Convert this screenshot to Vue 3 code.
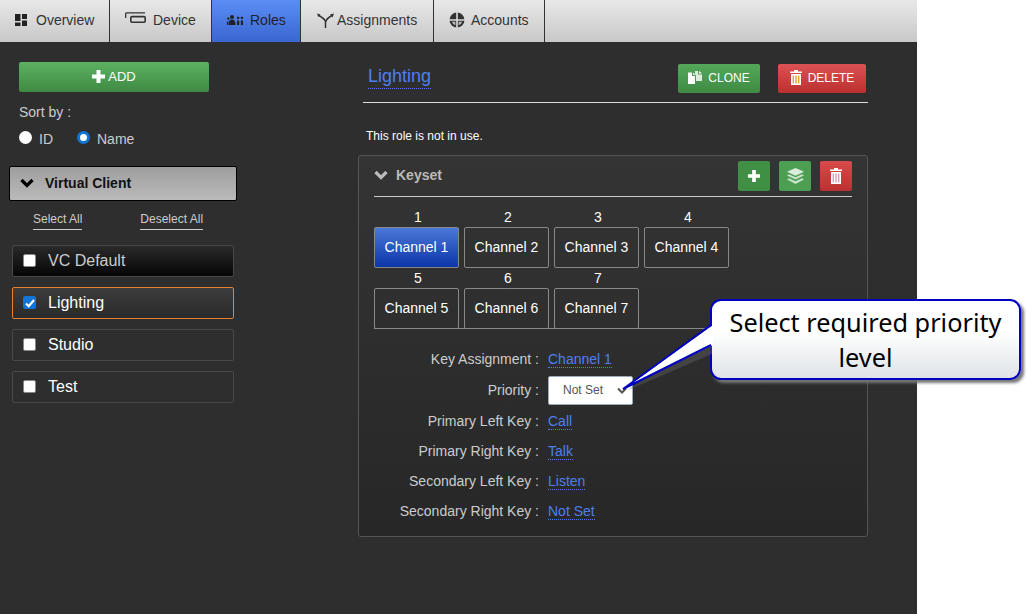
<template>
  <div class="page">
    <nav class="tabs">
      <a v-for="tab in tabs" :key="tab.name" class="tab" :class="[tab.cls, { active: tab.name === 'Roles' }]" :style="{ width: tab.width + 'px' }">
        <svg v-if="tab.name === 'Overview'" class="tab-icon" width="12" height="12" viewBox="0 0 12 12">
          <path d="M0 0h5.500v7H0zM7 0h5v5H7zM0 8.500h5.500V12H0zM7 6.500h5V12H7z" fill="#222" />
        </svg>
        <svg v-else-if="tab.name === 'Device'" class="tab-icon device-icon" width="21" height="11" viewBox="0 0 21 11">
          <path d="M.7 6V2Q.7 .8 2 .8H20" fill="none" stroke="#333" stroke-width="1.300" />
          <rect x="5.800" y="4.600" width="14.400" height="5.600" rx="1.200" fill="none" stroke="#333" stroke-width="1.600" />
        </svg>
        <svg v-else-if="tab.name === 'Roles'" class="tab-icon" width="16" height="10" viewBox="0 0 16 10">
          <circle cx="5" cy="2" r="2" fill="#222" />
          <path d="M1.500 10Q1.500 4.500 5 4.500T8.500 10z" fill="#222" />
          <circle cx="1.300" cy="3.600" r="1.200" fill="#222" />
          <path d="M0 10V6.500h1.500L.8 10z" fill="#222" />
          <rect x="10" y="1.800" width="2.200" height="2.200" fill="#222" />
          <rect x="13.800" y="1.800" width="2.200" height="2.200" fill="#222" />
          <rect x="10" y="5.500" width="2.200" height="4.500" fill="#222" />
          <rect x="13.800" y="5.500" width="2.200" height="4.500" fill="#222" />
        </svg>
        <svg v-else-if="tab.name === 'Assignments'" class="tab-icon" width="17" height="15" viewBox="0 0 17 15">
          <path d="M8.500 15V8.500Q8 6 1 2" fill="none" stroke="#333" stroke-width="1.500" />
          <path d="M8.500 9Q10 5 15 2.500" fill="none" stroke="#333" stroke-width="1.500" />
          <path d="M0 .5L3.500 1.500 1.500 4zM17 .5L13 1.500 15.500 4.500z" fill="#333" />
        </svg>
        <svg v-else class="tab-icon" width="16" height="16" viewBox="0 0 16 16">
          <circle cx="8" cy="8" r="7.500" fill="#333" />
          <path d="M7.200 0h1.600v16H7.200zM0 7.200h16v1.600H0z" fill="#ddd" />
          <path d="M2.800 9.800h3.600v3.400q-2.600-.7-3.600-3.400zM9.600 9.800h3.600q-1 2.700-3.600 3.400z" fill="#bbb" />
        </svg>
        <span>{{ tab.name }}</span>
      </a>
    </nav>

    <div class="body">
      <aside class="sidebar">
        <button class="add-btn">
          <svg width="13" height="13" viewBox="0 0 13 13"><path d="M4.500 0h4v4.500H13v4H8.500V13h-4V8.500H0v-4h4.500z" fill="#fff" /></svg>
          <span>ADD</span>
        </button>
        <div class="sort-label">Sort by :</div>
        <div class="sort-row">
          <span class="radio"></span><span class="radio-text id-text">ID</span>
          <span class="radio checked"></span><span class="radio-text">Name</span>
        </div>

        <div class="group">
          <svg width="14" height="10" viewBox="0 0 14 10"><path d="M1.500 2l5.500 5.500L12.500 2" fill="none" stroke="#000" stroke-width="3.200" /></svg>
          <span>Virtual Client</span>
        </div>
        <div class="select-links">
          <a>Select All</a>
          <a>Deselect All</a>
        </div>

        <div class="role-list">
          <div v-for="role in roles" :key="role" class="role" :class="{ selected: role === 'Lighting', first: role === 'VC Default' }">
            <span class="check" :class="{ on: role === 'Lighting' }">
              <svg v-if="role === 'Lighting'" width="12" height="12" viewBox="0 0 12 12"><path d="M2 6.500l2.700 2.700L10 3" fill="none" stroke="#fff" stroke-width="2.200" /></svg>
            </span>
            <span class="role-name">{{ role }}</span>
          </div>
        </div>
      </aside>

      <main class="content">
        <header class="title-row">
          <a class="title link">Lighting</a>
          <div class="title-actions">
            <button class="btn green clone">
              <svg width="14" height="13" viewBox="0 0 14 13">
                <path d="M0 1.500h4V5h3v8H0z" fill="#fff" />
                <path d="M5 1.500L7.500 4H5z" fill="#e8f2e8" />
                <path d="M7 0h3v3.500h4V10H8V4.500L7 3.500z" fill="#dcebdc" />
                <path d="M11 0l3 2.500h-3z" fill="#fff" />
              </svg>
              <span>CLONE</span>
            </button>
            <button class="btn red delete">
              <svg width="12" height="15" viewBox="0 0 12 15">
                <path d="M4 0h4v1.500h4V3H0V1.500h4zM1 4h10v11H1z" fill="#fff" />
                <path d="M2.600 5.500h1.400v8H2.600zM5.300 5.500h1.400v8H5.300zM8 5.500h1.400v8H8z" fill="#e8a03c" />
              </svg>
              <span>DELETE</span>
            </button>
          </div>
        </header>

        <p class="usage">This role is not in use.</p>

        <section class="panel">
          <div class="panel-head">
            <svg class="chevron" width="14" height="10" viewBox="0 0 14 10"><path d="M1.500 2l5.500 5.500L12.500 2" fill="none" stroke="#bbb" stroke-width="3.200" /></svg>
            <span class="panel-title">Keyset</span>
            <div class="panel-actions">
              <button class="square dark-green">
                <svg width="12" height="12" viewBox="0 0 13 13"><path d="M4.500 0h4v4.500H13v4H8.500V13h-4V8.500H0v-4h4.500z" fill="#fff" /></svg>
              </button>
              <button class="square light-green">
                <svg width="17" height="16" viewBox="0 0 17 16">
                  <path d="M8.500 0l8.500 3.800-8.500 4L0 3.800z" fill="#dcecdc" />
                  <path d="M2 6.300l6.500 3 6.500-3L17 7.500l-8.500 4L0 7.500zM2 10.300l6.500 3 6.500-3 2 1.200L8.500 16 0 11.500z" fill="#c8e2c8" />
                </svg>
              </button>
              <button class="square flat-red">
                <svg width="12" height="16" viewBox="0 0 12 16">
                  <path d="M4 0h4v1.500h4V3H0V1.500h4zM1 4h10v12H1z" fill="#fff" />
                  <path d="M2.600 5.500h1.400v9H2.600zM5.300 5.500h1.400v9H5.300zM8 5.500h1.400v9H8z" fill="#d0a0b8" />
                </svg>
              </button>
            </div>
          </div>

          <div class="keys">
            <div v-for="n in 7" :key="n" class="key">
              <div class="key-num">{{ n }}</div>
              <button class="key-btn" :class="{ active: n === 1 }">Channel {{ n }}</button>
            </div>
          </div>

          <dl class="fields">
            <template v-for="field in fields" :key="field.label">
              <dt>{{ field.label }} :</dt>
              <dd>
                <div v-if="field.select" class="select">Not Set
                  <svg width="10" height="8" viewBox="0 0 10 8"><path d="M1 1.500l4 4 4-4" fill="none" stroke="#555" stroke-width="2" /></svg>
                </div>
                <a v-else class="link">{{ field.value }}</a>
              </dd>
            </template>
          </dl>
        </section>
      </main>
    </div>

    <!-- callout annotation sits over the screenshot -->
    <div class="callout">Select required priority level</div>
    <svg class="callout-tail" width="96" height="75" viewBox="0 0 96 75">
      <path d="M92 12L8 70 92 34z" fill="#555" opacity=".55" />
      <path d="M93 5L3 69 93 25z" fill="#fff" />
      <path d="M91 5L3 69 91 25" fill="none" stroke="#0000c0" stroke-width="2" />
    </svg>
  </div>
</template>

<script setup>
const tabs = [
  { name: 'Overview', width: 110, cls: 'tab-overview' },
  { name: 'Device', width: 102, cls: 'tab-device' },
  { name: 'Roles', width: 89, cls: 'tab-roles' },
  { name: 'Assignments', width: 133, cls: 'tab-assign' },
  { name: 'Accounts', width: 111, cls: 'tab-accounts' },
]

const roles = ['VC Default', 'Lighting', 'Studio', 'Test']

const fields = [
  { label: 'Key Assignment', value: 'Channel 1' },
  { label: 'Priority', select: true },
  { label: 'Primary Left Key', value: 'Call' },
  { label: 'Primary Right Key', value: 'Talk' },
  { label: 'Secondary Left Key', value: 'Listen' },
  { label: 'Secondary Right Key', value: 'Not Set' },
]
</script>

<style>
body {
  margin: 0;
  background: #fff;
}
</style>

<style scoped>
.page {
  position: relative;
  width: 1034px;
  height: 614px;
  overflow: hidden;
  font-family: "Liberation Sans", Arial, sans-serif;
  background: #fff;
}

button {
  font-family: inherit;
  border: 0;
  padding: 0;
}

.tabs {
  display: flex;
  width: 917px;
  height: 42px;
  background: linear-gradient(#e8e8e8, #c8c8c8);
}

.tab {
  box-sizing: border-box;
  display: flex;
  align-items: center;
  gap: 9px;
  padding: 0 0 2px 15px;
  border-right: 1px solid #333;
  font-size: 14px;
  color: #333;
}

.tab.active {
  background: linear-gradient(#5b8df5, #3a66d0);
  color: #222;
}

.tab-device {
  gap: 7px;
}

.tab-roles {
  gap: 7px;
}

.tab-assign {
  padding-left: 16px;
  gap: 3px;
}

.tab-accounts {
  gap: 6px;
}

.tab-icon {
  flex: none;
}

.device-icon {
  margin-top: -6px;
}

.body {
  display: flex;
  width: 917px;
  height: 572px;
  background: #2e2e2e;
}

.sidebar {
  width: 358px;
  box-sizing: border-box;
  padding-top: 20px;
  flex: none;
}

.add-btn {
  display: flex;
  align-items: center;
  justify-content: center;
  gap: 3px;
  width: 190px;
  height: 30px;
  margin-left: 19px;
  padding-bottom: 2px;
  border-radius: 2px;
  background: linear-gradient(#5cb162, #3f8a44);
  color: #fff;
  font-size: 13px;
}

.sort-label {
  margin: 12px 0 0 19px;
  font-size: 14px;
  line-height: 16px;
  color: #ccc;
}

.sort-row {
  display: flex;
  align-items: center;
  height: 20px;
  margin: 9px 0 0 19px;
}

.radio {
  box-sizing: border-box;
  width: 13px;
  height: 13px;
  border-radius: 50%;
  background: #fff;
  margin-top: -3px;
}

.radio.checked {
  border: 3px solid #0f75d8;
}

.radio-text {
  margin-left: 7px;
  font-size: 14px;
  color: #ccc;
}

.id-text {
  margin-right: 24px;
}

.group {
  box-sizing: border-box;
  display: flex;
  align-items: center;
  gap: 11px;
  width: 228px;
  height: 35px;
  margin: 17px 0 0 9px;
  padding: 0 0 2px 10px;
  border: 1px solid #000;
  border-radius: 2px;
  background: linear-gradient(#9e9e9e, #bababa);
  font-size: 14px;
  font-weight: bold;
  color: #111;
}

.select-links {
  display: flex;
  margin: 11px 0 0 33px;
  gap: 58px;
  font-size: 12px;
  color: #ccc;
}

.select-links a {
  padding-bottom: 3px;
  border-bottom: 1px solid #ccc;
}

.role-list {
  display: flex;
  flex-direction: column;
  gap: 10px;
  width: 222px;
  margin: 15px 0 0 12px;
}

.role {
  box-sizing: border-box;
  display: flex;
  align-items: center;
  height: 32px;
  padding-left: 10px;
  border: 1px solid #484848;
  border-radius: 2px;
  font-size: 16px;
  color: #fff;
}

.role.first {
  background: linear-gradient(#2a2a2a, #050505);
  color: #ccc;
}

.role.selected {
  border-color: #e8812f;
  background: linear-gradient(#3c3c3c, #2a2a2a);
}

.check {
  box-sizing: border-box;
  display: flex;
  align-items: center;
  justify-content: center;
  width: 13px;
  height: 13px;
  margin-top: -1px;
  border-radius: 2px;
  background: #fff;
  border: 1px solid #888;
}

.check.on {
  background: #0f75d8;
  border: 0;
}

.role-name {
  margin-left: 12px;
}

.content {
  width: 510px;
  padding-top: 19px;
  box-sizing: border-box;
}

.title-row {
  box-sizing: border-box;
  display: flex;
  justify-content: space-between;
  align-items: flex-start;
  height: 42px;
  margin-left: 5px;
  padding: 3px 2px 0 5px;
  border-bottom: 1px solid #ddd;
}

.title {
  font-size: 18px;
  line-height: 22px;
  margin-top: 1px;
  padding-bottom: 1px;
}

.link {
  color: #4d7ff0;
  border-bottom: 1px dotted #4d7ff0;
}

.title-actions {
  display: flex;
  gap: 18px;
}

.btn {
  display: flex;
  align-items: center;
  justify-content: center;
  gap: 6px;
  height: 29px;
  padding-bottom: 2px;
  box-sizing: border-box;
  border-radius: 2px;
  color: #fff;
  font-size: 12px;
}

.btn.green {
  width: 82px;
  background: linear-gradient(#54a859, #3f8a44);
}

.btn.red {
  width: 88px;
  background: linear-gradient(#dc5252, #bb2f2f);
}

.usage {
  margin: 26px 0 0 8px;
  font-size: 12px;
  line-height: 14px;
  color: #fff;
}

.panel {
  box-sizing: border-box;
  height: 382px;
  margin-top: 12px;
  padding: 5px 15px 0;
  border: 1px solid #555;
  border-radius: 3px;
  background: linear-gradient(#343434, #272727);
}

.panel-head {
  display: flex;
  align-items: center;
  height: 36px;
  padding-bottom: 5px;
  box-sizing: border-box;
  border-bottom: 1px solid #ccc;
}

.chevron {
  margin-bottom: 2px;
}

.panel-title {
  margin: 0 0 2px 8px;
  font-size: 14px;
  font-weight: bold;
  color: #bbb;
}

.panel-actions {
  display: flex;
  gap: 9px;
  margin-left: auto;
}

.square {
  display: flex;
  align-items: center;
  justify-content: center;
  width: 32px;
  height: 30px;
  border-radius: 2px;
}

.dark-green {
  background: #3f8f45;
}

.light-green {
  background: #4b9e52;
}

.flat-red {
  background: linear-gradient(#d94b4b, #bb3030);
}

.keys {
  display: grid;
  grid-template-columns: repeat(4, 85px);
  column-gap: 5px;
  row-gap: 2px;
  align-content: start;
  height: 120px;
  margin-top: 12px;
  box-sizing: border-box;
  border-bottom: 1px solid #888;
}

.key {
  text-align: center;
}

.key-num {
  font-size: 14px;
  line-height: 16px;
  padding-left: 3px;
  color: #fff;
}

.key-btn {
  box-sizing: border-box;
  width: 85px;
  height: 41px;
  margin-top: 2px;
  padding-bottom: 2px;
  display: block;
  background: transparent;
  border: 1px solid #888;
  border-radius: 2px;
  color: #fff;
  font-size: 14px;
}

.key-btn.active {
  background: linear-gradient(#4a78d8, #0c35a8);
}

.fields {
  display: grid;
  grid-template-columns: 165px 1fr;
  grid-template-rows: 30px 32px 30px 30px 30px 30px;
  column-gap: 9px;
  align-items: center;
  margin: 15px 0 0 0;
  font-size: 14px;
}

.fields dt {
  text-align: right;
  color: #ccc;
}

.fields dd {
  margin: 0;
}

.select {
  position: relative;
  box-sizing: border-box;
  width: 85px;
  height: 29px;
  padding-left: 14px;
  border: 1px solid #9ab;
  border-radius: 2px;
  background: #fff;
  color: #555;
  font-size: 12px;
  line-height: 27px;
}

.select svg {
  position: absolute;
  right: 5px;
  top: 10px;
}

.callout-tail {
  position: absolute;
  left: 620px;
  top: 320px;
}

.callout {
  position: absolute;
  left: 710px;
  top: 299px;
  box-sizing: border-box;
  width: 311px;
  height: 81px;
  padding: 4px 6px;
  border: 2px solid #0000c0;
  border-radius: 11px;
  background: linear-gradient(#fff 40%, #dfe3e8);
  box-shadow: 3px 3px 3px #777;
  font-family: "Noto Sans", "Open Sans", sans-serif;
  font-size: 25.3px;
  line-height: 35px;
  text-align: center;
  color: #000;
}
</style>
